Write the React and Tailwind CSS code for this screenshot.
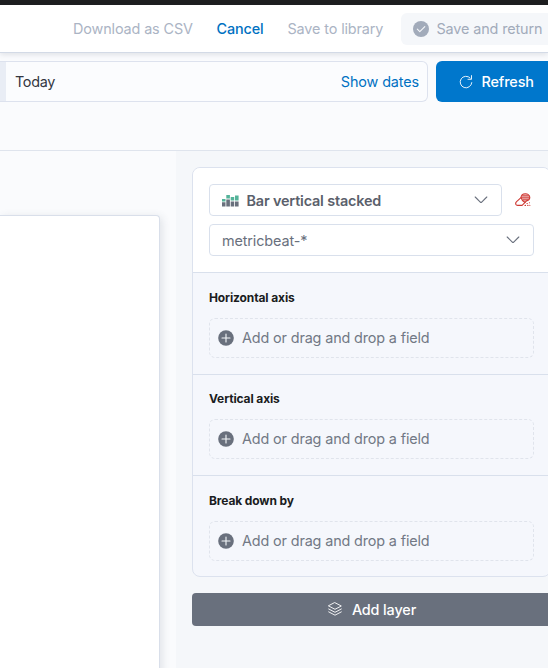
import React from 'react';

const dimensions = ['Horizontal axis', 'Vertical axis', 'Break down by'];

function Chevron() {
  return (
    <svg width="14" height="8" viewBox="0 0 14 8" fill="none" stroke="#69707d" strokeWidth="1.1" strokeLinecap="round" strokeLinejoin="round" className="shrink-0">
      <path d="M1.200 1l5.100 5.100a1 1 0 0 0 1.400 0L12.800 1" />
    </svg>
  );
}

function CheckInCircle() {
  return (
    <svg width="16" height="16" viewBox="0 0 16 16" className="shrink-0">
      <circle cx="8" cy="8" r="8" fill="#a2abba" />
      <path d="M4.3 8.1l2.500 2.500 5-5" fill="none" stroke="#f5f7fa" strokeWidth="1.1" strokeLinecap="round" strokeLinejoin="round" />
    </svg>
  );
}

function RefreshIcon() {
  return (
    <svg width="14" height="14" viewBox="0 0 14 14" fill="none" stroke="#fff" strokeWidth=".9" strokeLinecap="round" className="shrink-0">
      <path d="M11.200 3A5.800 5.800 0 1 0 12.800 7.600" />
      <path d="M12.500 .6v3.700H9" />
    </svg>
  );
}

function StackedBars() {
  return (
    <svg width="17" height="13" viewBox="0 0 17 13" className="shrink-0">
      <path d="M0 5h3.500v2.500H0zM4.300 1h3.600v3.500H4.300zM8.700 3h3.500v3.500H8.700zM13 1.500h3.600v5H13z" fill="#54b399" />
      <path d="M0 8.200h3.500v4.300H0zM4.300 5.500h3.600v7H4.300zM8.700 7.500h3.500v5H8.700zM13 7.500h3.600v5H13z" fill="#69707d" />
    </svg>
  );
}

function Eraser() {
  return (
    <svg width="16" height="14" viewBox="0 0 16 14" fill="none" stroke="#cf3a34" strokeWidth="1.1" strokeLinejoin="round" strokeLinecap="round" className="shrink-0">
      <path d="M6 4.600L1.600 8.700C.6 9.600.4 10.800 1.300 11.800c.4.400.8.600 1.400.600h4.400l3-3" />
      <path d="M6 4.600C6.200 2.600 8 .8 10.300.8c2.600 0 4.500 1.700 4.500 3.700 0 1.500-1.300 2.900-3.200 3.400L10 9.400C8 8.300 6.500 6.700 6 4.600z" fill="#cf3a34" fillOpacity=".35" />
      <path d="M7.500 2.800h6.500M7 4.800h7.400M8.300 6.800h4.800" strokeWidth=".9" />
      <path d="M10 12.400h.5M12 10.500h.3M12.700 12.400h.3M14.400 9.800h.1M14.700 12.300h.2" />
    </svg>
  );
}

function PlusInCircle() {
  return (
    <svg width="16" height="16" viewBox="0 0 16 16" className="shrink-0">
      <circle cx="8" cy="8" r="7.800" fill="#69707d" />
      <path d="M8 4v8M4 8h8" stroke="#f5f7fa" strokeWidth="1.100" strokeLinecap="round" />
    </svg>
  );
}

function Layers() {
  return (
    <svg width="14" height="14" viewBox="0 0 14 14" fill="none" stroke="#fff" strokeWidth=".9" strokeLinejoin="round" strokeLinecap="round" className="shrink-0">
      <path d="M7 .7L13.300 4 7 7.300.7 4z" />
      <path d="M.7 7L7 10.300 13.300 7M.7 9.900L7 13.200l6.300-3.300" />
    </svg>
  );
}

function Dimension({ label }) {
  return (
    <section className="h-[101.500px] shrink-0 border-t border-[#d9e0ec] px-4 pt-[15.500px]">
      <h3 className="text-xs leading-[18px] font-bold text-[#1a1c21]">{label}</h3>
      <button className="mt-[11px] flex h-10 w-full items-center gap-[8px] rounded-md border border-dashed border-[#e0e4ec] pl-2 text-[#727985]">
        <PlusInCircle />
        <span className="tracking-[-0.14px]">Add or drag and drop a field</span>
      </button>
    </section>
  );
}

export default function App() {
  return (
    <div className="flex h-[668px] w-[548px] flex-col overflow-hidden bg-[#fafbfd] font-['Inter',sans-serif] text-[14.4px] tracking-[-0.12px] whitespace-nowrap">
      <div className="h-[5px] shrink-0 bg-[#1d1e20]" />
      <header className="z-10 flex h-12 shrink-0 items-center border-b border-[#d3dae6] bg-white pl-[73px] text-[#abb4c4] shadow-[0_2px_5px_rgba(60,70,90,0.13)]">
        <span className="w-[143.500px] shrink-0">Download as CSV</span>
        <span className="w-[71px] shrink-0 font-medium text-[#0071c2]">Cancel</span>
        <span className="w-[113px] shrink-0">Save to library</span>
        <div className="flex h-8 w-[170px] shrink-0 items-center gap-2 rounded-md bg-[#f5f7fa] pl-3 text-[#a2abba]">
          <CheckInCircle />
          <span>Save and return</span>
        </div>
      </header>
      <div className="flex h-[98px] shrink-0 gap-2 border-b border-[#dfe4ed] pt-2">
        <div className="flex h-[41px] w-[428px] shrink-0 items-center rounded-r-md border border-l-0 border-[#dde2ee] bg-[#fbfcfe] pr-2">
          <div className="h-full w-[6px] bg-[#e9edf5]" />
          <span className="ml-[9px] tracking-[-0.3px] text-[#343741]">Today</span>
          <span className="ml-auto text-[#0071c2]">Show dates</span>
        </div>
        <button className="flex h-[41px] w-[140px] shrink-0 items-center gap-[9px] rounded-md bg-[#0077cc] pl-[22.500px] font-medium text-white">
          <RefreshIcon />
          <span>Refresh</span>
        </button>
      </div>
      <main className="flex min-h-0 flex-1">
        <div className="w-[176px] shrink-0 overflow-hidden pt-16">
          <div className="h-[500px] w-40 rounded-tr-[4px] border-t border-r border-[#d9dfea] bg-white shadow-[2px_2px_8px_rgba(60,70,90,0.14)]" />
        </div>
        <aside className="flex-1 bg-[#f5f7fa] pt-4 pl-4">
          <div className="flex h-[410px] w-[359px] flex-col overflow-hidden rounded-lg border border-[#dce2ee] bg-[#f5f7fc]">
            <div className="flex h-[104px] shrink-0 flex-col gap-2 bg-white px-4 pt-4">
              <div className="flex h-8 items-center">
                <button className="flex h-8 w-[293px] shrink-0 items-center rounded border border-[#d9e0ec] pr-[13px] pl-3">
                  <StackedBars />
                  <span className="ml-[7.500px] pt-px font-semibold tracking-[-0.16px] text-[#5a606b]">Bar vertical stacked</span>
                  <span className="ml-auto"><Chevron /></span>
                </button>
                <span className="ml-[13px] shrink-0"><Eraser /></span>
              </div>
              <button className="flex h-8 w-full items-center justify-between rounded border border-[#d9e0ec] pr-[13px] pl-3 text-[#69707d]">
                <span className="pt-px">metricbeat-*</span>
                <Chevron />
              </button>
            </div>
            {dimensions.map((label) => <Dimension key={label} label={label} />)}
          </div>
          <button className="mt-4 flex h-[32.500px] w-[359px] items-center justify-center gap-[10px] rounded bg-[#69707d] pl-px font-medium text-white">
            <Layers />
            <span className="pt-px">Add layer</span>
          </button>
        </aside>
      </main>
    </div>
  );
}
